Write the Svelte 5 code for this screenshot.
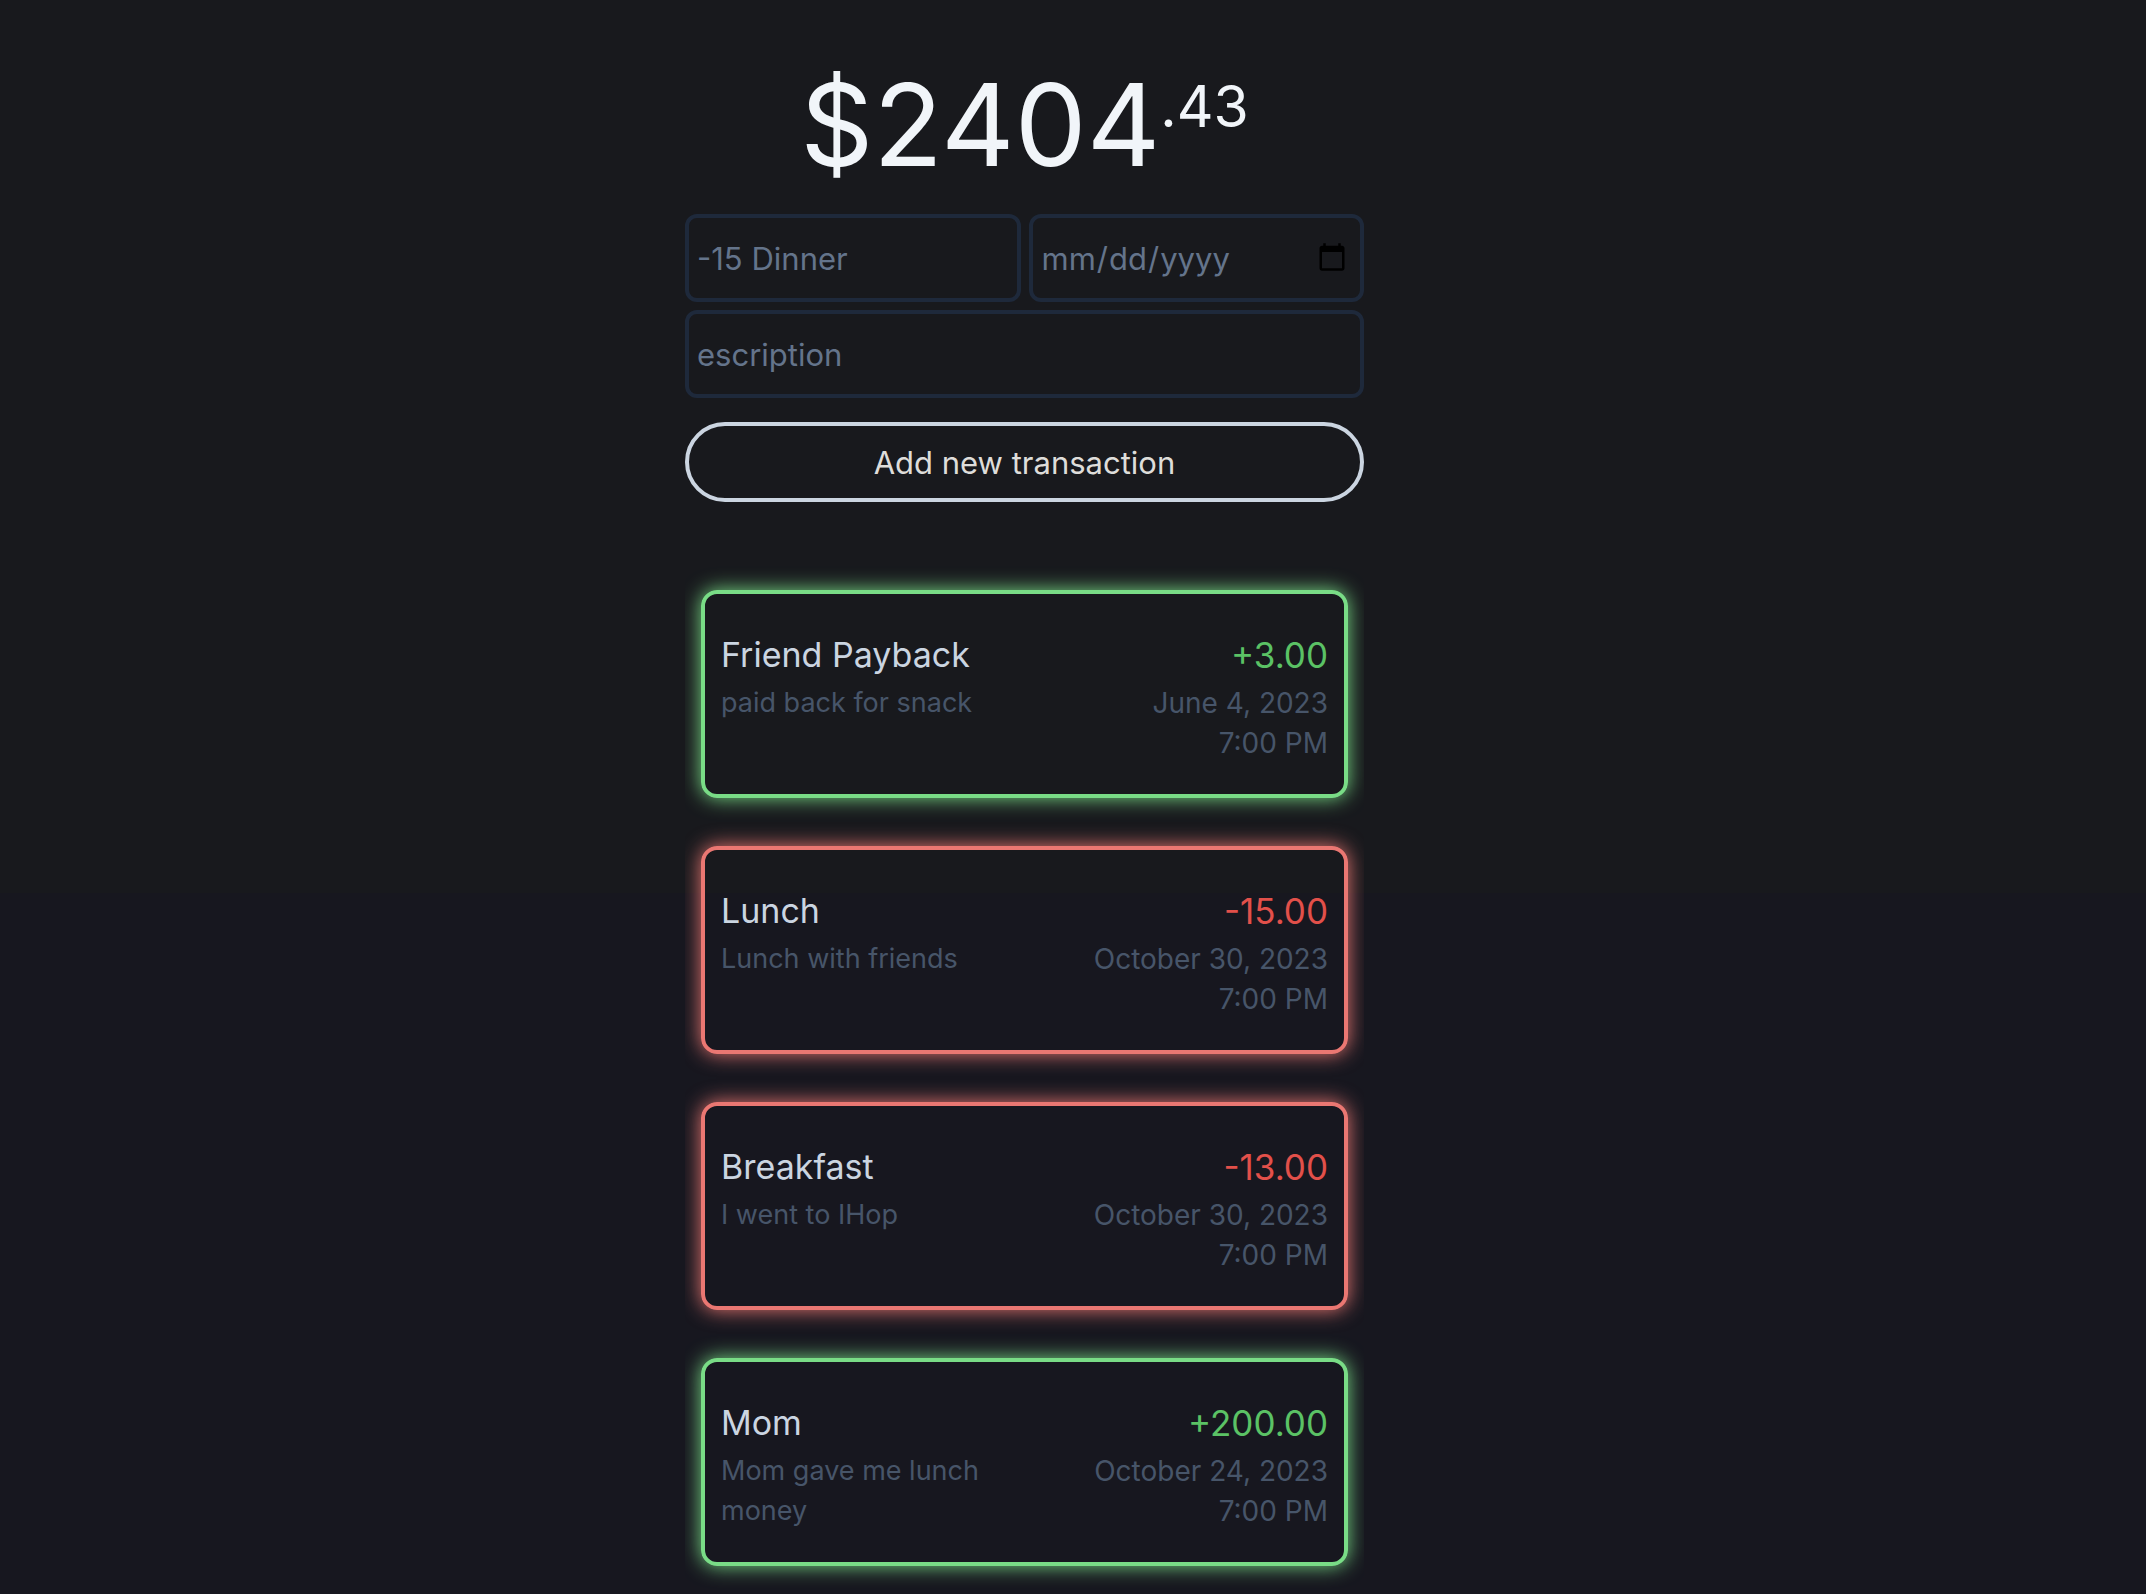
<script>
  const transactions = [
    { name: 'Friend Payback', note: 'paid back for snack', amount: '+3.00', date: 'June 4, 2023', time: '7:00 PM', gain: true },
    { name: 'Lunch', note: 'Lunch with friends', amount: '-15.00', date: 'October 30, 2023', time: '7:00 PM', gain: false },
    { name: 'Breakfast', note: 'I went to IHop', amount: '-13.00', date: 'October 30, 2023', time: '7:00 PM', gain: false },
    { name: 'Mom', note: 'Mom gave me lunch money', amount: '+200.00', date: 'October 24, 2023', time: '7:00 PM', gain: true }
  ];
</script>

<main>
  <h1>$2404<span class="cents">.43</span></h1>

  <form onsubmit={(e) => e.preventDefault()}>
    <div class="fields">
      <input type="text" aria-label="Amount and name" placeholder="-15 Dinner" />
      <input type="date" aria-label="Date" />
      <input class="wide" type="text" aria-label="Description" placeholder="escription" />
    </div>
    <button type="submit">Add new transaction</button>
  </form>

  <ul>
    {#each transactions as t}
      <li class:gain={t.gain}>
        <div class="left">
          <div class="title">{t.name}</div>
          <div class="note">{t.note}</div>
        </div>
        <div class="right">
          <div class="title amount">{t.amount}</div>
          <div class="note when">{t.date}</div>
          <div class="note when">{t.time}</div>
        </div>
      </li>
    {/each}
  </ul>
</main>

<style>
  :global(body) {
    background: #17171f linear-gradient(#18191d 56%, #17171f 56%);
    color: #cbd5e1;
    font-family: Inter, 'Liberation Sans', sans-serif;
  }
  :global(#app) {
    padding-right: 97px;
  }
  main {
    box-sizing: border-box;
    max-width: 679px;
    margin: 0 auto;
    padding-top: 40px;
  }
  h1 {
    display: flex;
    justify-content: center;
    align-items: flex-start;
    margin: 0;
    height: 174px;
    font-size: 114px;
    line-height: 170px;
    font-weight: 400;
    color: #f1f5f9;
  }
  .cents {
    font-size: 57px;
    line-height: 134px;
  }
  .fields {
    display: grid;
    grid-template-columns: 1fr 1fr;
    gap: 8px;
  }
  input {
    box-sizing: border-box;
    width: 100%;
    min-width: 0;
    height: 88px;
    margin: 0;
    padding: 0 8px;
    border: 4px solid #1e293b;
    border-radius: 12px;
    background: transparent;
    color: #64748b;
    font: inherit;
    font-size: 31px;
  }
  input::placeholder {
    color: #64748b;
    opacity: 1;
  }
  input::-webkit-calendar-picker-indicator {
    width: 32px;
    height: 32px;
    padding: 0;
    margin-right: 4px;
  }
  .wide {
    grid-column: 1 / -1;
  }
  button {
    box-sizing: border-box;
    display: block;
    width: 100%;
    height: 80px;
    margin: 24px 0 0;
    border: 4px solid #cbd5e1;
    border-radius: 40px;
    background: transparent;
    color: #deddda;
    font: inherit;
    font-size: 31px;
  }
  ul {
    display: flex;
    flex-direction: column;
    gap: 48px;
    margin: 56px 0 0;
    padding: 32px 16px 28px;
    overflow: hidden;
    list-style: none;
  }
  li {
    --edge: #ea7772;
    --text: #e2504a;
    display: flex;
    justify-content: space-between;
    gap: 32px;
    padding: 37px 16px 31px;
    border: 4px solid var(--edge);
    border-radius: 16px;
    box-shadow: 0 0 20px var(--edge);
  }
  .gain {
    --edge: #79dc86;
    --text: #5bc265;
  }
  .left {
    flex: 0 1 280px;
  }
  .right {
    text-align: right;
  }
  .title {
    margin-bottom: 4px;
    font-size: 34px;
    line-height: 48px;
  }
  .amount {
    color: var(--text);
    font-size: 35px;
  }
  .note {
    color: #475569;
    font-size: 27px;
    line-height: 40px;
  }
  .when {
    font-size: 28px;
  }
</style>
